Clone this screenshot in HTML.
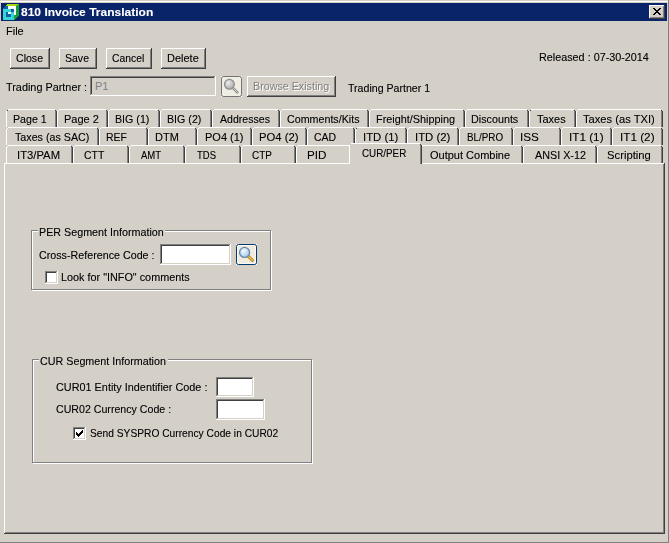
<!DOCTYPE html>
<html><head><meta charset="utf-8"><style>
html,body{margin:0;padding:0;width:669px;height:543px;overflow:hidden;background:#d4d0c8}
body>div{position:absolute}
.t{position:absolute;font:11px/13px "Liberation Sans",sans-serif;white-space:pre;color:#000;transform-origin:0 0;filter:url(#crisp)}
.c{text-align:center}
</style></head><body>
<svg width="0" height="0" style="position:absolute"><filter id="crisp" x="0" y="0" width="100%" height="100%"><feComponentTransfer><feFuncA type="gamma" amplitude="1" exponent="0.8" offset="0"/></feComponentTransfer></filter></svg>
<div style="left:0px;top:0px;width:669px;height:543px;background:#d4d0c8"></div>
<div style="left:0px;top:1px;width:668px;height:1px;background:#ffffff"></div>
<div style="left:668px;top:0px;width:1px;height:543px;background:#808080"></div>
<div style="left:0px;top:542px;width:669px;height:1px;background:#808080"></div>
<div style="left:1px;top:3px;width:666px;height:18px;background:#0a246a"></div>
<svg style="position:absolute;left:0;top:0" width="22" height="22" shape-rendering="crispEdges"><rect x="7" y="4" width="11" height="1" fill="#a8dc08"/><rect x="6" y="5" width="10" height="1" fill="#a8dc08"/><rect x="16" y="5" width="1" height="1" fill="#70c020"/><rect x="18" y="4" width="1" height="1" fill="#50b028"/><rect x="17" y="5" width="2" height="1" fill="#12a038"/><rect x="16" y="6" width="3" height="9" fill="#12a038"/><rect x="14" y="15" width="5" height="1" fill="#12a038"/><rect x="14" y="16" width="4" height="1" fill="#12a038"/><rect x="14" y="17" width="3" height="1" fill="#12a038"/><rect x="14" y="18" width="2" height="1" fill="#12a038"/><rect x="14" y="19" width="1" height="1" fill="#12a038"/><rect x="8" y="6" width="8" height="3" fill="#ffffff"/><rect x="14" y="9" width="2" height="6" fill="#ffffff"/><rect x="5" y="6" width="3" height="1" fill="#0868a8"/><rect x="4" y="7" width="4" height="1" fill="#0868a8"/><rect x="3" y="8" width="5" height="1" fill="#0868a8"/><rect x="3" y="9" width="11" height="11" fill="#38d6d6"/><rect x="11" y="9" width="3" height="3" fill="#0868a8"/><rect x="6" y="12" width="5" height="5" fill="#0868a8"/><rect x="8" y="12" width="3" height="2" fill="#ffffff"/></svg>
<div style="left:649px;top:5px;width:16px;height:14px;background:#d4d0c8"></div>
<div style="left:649px;top:5px;width:15px;height:1px;background:#ffffff"></div>
<div style="left:649px;top:5px;width:1px;height:13px;background:#ffffff"></div>
<div style="left:649px;top:18px;width:16px;height:1px;background:#404040"></div>
<div style="left:664px;top:5px;width:1px;height:14px;background:#404040"></div>
<div style="left:650px;top:17px;width:14px;height:1px;background:#808080"></div>
<div style="left:663px;top:6px;width:1px;height:12px;background:#808080"></div>
<svg style="position:absolute;left:653px;top:8px" width="8" height="7" shape-rendering="crispEdges"><path fill="#000" d="M0 0h1v1h-1zM1 0h1v1h-1zM6 0h1v1h-1zM7 0h1v1h-1zM1 1h1v1h-1zM2 1h1v1h-1zM5 1h1v1h-1zM6 1h1v1h-1zM2 2h1v1h-1zM3 2h1v1h-1zM4 2h1v1h-1zM5 2h1v1h-1zM3 3h1v1h-1zM4 3h1v1h-1zM2 4h1v1h-1zM3 4h1v1h-1zM4 4h1v1h-1zM5 4h1v1h-1zM1 5h1v1h-1zM2 5h1v1h-1zM5 5h1v1h-1zM6 5h1v1h-1zM0 6h1v1h-1zM1 6h1v1h-1zM6 6h1v1h-1zM7 6h1v1h-1z"/></svg>
<div style="left:10px;top:48px;width:40px;height:21px;background:#d4d0c8"></div>
<div style="left:10px;top:48px;width:39px;height:1px;background:#ffffff"></div>
<div style="left:10px;top:48px;width:1px;height:20px;background:#ffffff"></div>
<div style="left:10px;top:68px;width:40px;height:1px;background:#404040"></div>
<div style="left:49px;top:48px;width:1px;height:21px;background:#404040"></div>
<div style="left:11px;top:67px;width:38px;height:1px;background:#808080"></div>
<div style="left:48px;top:49px;width:1px;height:19px;background:#808080"></div>
<div style="left:59px;top:48px;width:38px;height:21px;background:#d4d0c8"></div>
<div style="left:59px;top:48px;width:37px;height:1px;background:#ffffff"></div>
<div style="left:59px;top:48px;width:1px;height:20px;background:#ffffff"></div>
<div style="left:59px;top:68px;width:38px;height:1px;background:#404040"></div>
<div style="left:96px;top:48px;width:1px;height:21px;background:#404040"></div>
<div style="left:60px;top:67px;width:36px;height:1px;background:#808080"></div>
<div style="left:95px;top:49px;width:1px;height:19px;background:#808080"></div>
<div style="left:106px;top:48px;width:46px;height:21px;background:#d4d0c8"></div>
<div style="left:106px;top:48px;width:45px;height:1px;background:#ffffff"></div>
<div style="left:106px;top:48px;width:1px;height:20px;background:#ffffff"></div>
<div style="left:106px;top:68px;width:46px;height:1px;background:#404040"></div>
<div style="left:151px;top:48px;width:1px;height:21px;background:#404040"></div>
<div style="left:107px;top:67px;width:44px;height:1px;background:#808080"></div>
<div style="left:150px;top:49px;width:1px;height:19px;background:#808080"></div>
<div style="left:161px;top:48px;width:45px;height:21px;background:#d4d0c8"></div>
<div style="left:161px;top:48px;width:44px;height:1px;background:#ffffff"></div>
<div style="left:161px;top:48px;width:1px;height:20px;background:#ffffff"></div>
<div style="left:161px;top:68px;width:45px;height:1px;background:#404040"></div>
<div style="left:205px;top:48px;width:1px;height:21px;background:#404040"></div>
<div style="left:162px;top:67px;width:43px;height:1px;background:#808080"></div>
<div style="left:204px;top:49px;width:1px;height:19px;background:#808080"></div>
<div style="left:90px;top:76px;width:126px;height:20px;background:#d4d0c8"></div>
<div style="left:90px;top:76px;width:125px;height:1px;background:#808080"></div>
<div style="left:90px;top:76px;width:1px;height:19px;background:#808080"></div>
<div style="left:91px;top:77px;width:123px;height:1px;background:#404040"></div>
<div style="left:91px;top:77px;width:1px;height:17px;background:#404040"></div>
<div style="left:90px;top:95px;width:126px;height:1px;background:#ffffff"></div>
<div style="left:215px;top:76px;width:1px;height:20px;background:#ffffff"></div>
<div style="left:91px;top:94px;width:124px;height:1px;background:#d4d0c8"></div>
<div style="left:214px;top:77px;width:1px;height:18px;background:#d4d0c8"></div>
<svg style="position:absolute;left:221px;top:76px" width="21" height="21">
<defs><radialGradient id="dg" cx="0.38" cy="0.35" r="0.7"><stop offset="0" stop-color="#ececec"/><stop offset="1" stop-color="#a8a8a8"/></radialGradient></defs>
<rect x="0" y="0" width="1" height="1" fill="#fff"/><rect x="20" y="0" width="1" height="1" fill="#fff"/><rect x="0" y="20" width="1" height="1" fill="#fff"/><rect x="20" y="20" width="1" height="1" fill="#fff"/><rect x="0.5" y="0.5" width="20" height="20" rx="2" fill="#f0ede2" stroke="#747474"/>
<line x1="11.8" y1="11.8" x2="16.3" y2="16.3" stroke="#8a8a8a" stroke-width="2.6" stroke-linecap="round"/>
<line x1="11.8" y1="11.8" x2="16.3" y2="16.3" stroke="#d8d8d8" stroke-width="1" stroke-linecap="round"/>
<circle cx="8.4" cy="8.3" r="4.9" fill="url(#dg)" stroke="#8e8e8e" stroke-width="1.3"/>
</svg>
<div style="left:247px;top:76px;width:89px;height:21px;background:#d4d0c8"></div>
<div style="left:247px;top:76px;width:88px;height:1px;background:#ffffff"></div>
<div style="left:247px;top:76px;width:1px;height:20px;background:#ffffff"></div>
<div style="left:247px;top:96px;width:89px;height:1px;background:#404040"></div>
<div style="left:335px;top:76px;width:1px;height:21px;background:#404040"></div>
<div style="left:248px;top:95px;width:87px;height:1px;background:#808080"></div>
<div style="left:334px;top:77px;width:1px;height:19px;background:#808080"></div>
<div style="left:4px;top:163px;width:661px;height:371px;background:#d4d0c8"></div>
<div style="left:4px;top:163px;width:660px;height:1px;background:#ffffff"></div>
<div style="left:4px;top:163px;width:1px;height:370px;background:#ffffff"></div>
<div style="left:4px;top:533px;width:661px;height:1px;background:#404040"></div>
<div style="left:664px;top:163px;width:1px;height:371px;background:#404040"></div>
<div style="left:5px;top:532px;width:659px;height:1px;background:#808080"></div>
<div style="left:663px;top:164px;width:1px;height:369px;background:#808080"></div>
<div style="left:6px;top:109px;width:51px;height:18px;background:#d4d0c8"></div>
<div style="left:8px;top:109px;width:47px;height:1px;background:#ffffff"></div>
<div style="left:7px;top:110px;width:1px;height:1px;background:#ffffff"></div>
<div style="left:6px;top:111px;width:1px;height:16px;background:#ffffff"></div>
<div style="left:55px;top:110px;width:1px;height:1px;background:#404040"></div>
<div style="left:55px;top:111px;width:1px;height:16px;background:#808080"></div>
<div style="left:56px;top:111px;width:1px;height:16px;background:#404040"></div>
<div style="left:57px;top:109px;width:51px;height:18px;background:#d4d0c8"></div>
<div style="left:59px;top:109px;width:47px;height:1px;background:#ffffff"></div>
<div style="left:58px;top:110px;width:1px;height:1px;background:#ffffff"></div>
<div style="left:57px;top:111px;width:1px;height:16px;background:#ffffff"></div>
<div style="left:106px;top:110px;width:1px;height:1px;background:#404040"></div>
<div style="left:106px;top:111px;width:1px;height:16px;background:#808080"></div>
<div style="left:107px;top:111px;width:1px;height:16px;background:#404040"></div>
<div style="left:108px;top:109px;width:52px;height:18px;background:#d4d0c8"></div>
<div style="left:110px;top:109px;width:48px;height:1px;background:#ffffff"></div>
<div style="left:109px;top:110px;width:1px;height:1px;background:#ffffff"></div>
<div style="left:108px;top:111px;width:1px;height:16px;background:#ffffff"></div>
<div style="left:158px;top:110px;width:1px;height:1px;background:#404040"></div>
<div style="left:158px;top:111px;width:1px;height:16px;background:#808080"></div>
<div style="left:159px;top:111px;width:1px;height:16px;background:#404040"></div>
<div style="left:160px;top:109px;width:52px;height:18px;background:#d4d0c8"></div>
<div style="left:162px;top:109px;width:48px;height:1px;background:#ffffff"></div>
<div style="left:161px;top:110px;width:1px;height:1px;background:#ffffff"></div>
<div style="left:160px;top:111px;width:1px;height:16px;background:#ffffff"></div>
<div style="left:210px;top:110px;width:1px;height:1px;background:#404040"></div>
<div style="left:210px;top:111px;width:1px;height:16px;background:#808080"></div>
<div style="left:211px;top:111px;width:1px;height:16px;background:#404040"></div>
<div style="left:212px;top:109px;width:68px;height:18px;background:#d4d0c8"></div>
<div style="left:214px;top:109px;width:64px;height:1px;background:#ffffff"></div>
<div style="left:213px;top:110px;width:1px;height:1px;background:#ffffff"></div>
<div style="left:212px;top:111px;width:1px;height:16px;background:#ffffff"></div>
<div style="left:278px;top:110px;width:1px;height:1px;background:#404040"></div>
<div style="left:278px;top:111px;width:1px;height:16px;background:#808080"></div>
<div style="left:279px;top:111px;width:1px;height:16px;background:#404040"></div>
<div style="left:280px;top:109px;width:89px;height:18px;background:#d4d0c8"></div>
<div style="left:282px;top:109px;width:85px;height:1px;background:#ffffff"></div>
<div style="left:281px;top:110px;width:1px;height:1px;background:#ffffff"></div>
<div style="left:280px;top:111px;width:1px;height:16px;background:#ffffff"></div>
<div style="left:367px;top:110px;width:1px;height:1px;background:#404040"></div>
<div style="left:367px;top:111px;width:1px;height:16px;background:#808080"></div>
<div style="left:368px;top:111px;width:1px;height:16px;background:#404040"></div>
<div style="left:369px;top:109px;width:96px;height:18px;background:#d4d0c8"></div>
<div style="left:371px;top:109px;width:92px;height:1px;background:#ffffff"></div>
<div style="left:370px;top:110px;width:1px;height:1px;background:#ffffff"></div>
<div style="left:369px;top:111px;width:1px;height:16px;background:#ffffff"></div>
<div style="left:463px;top:110px;width:1px;height:1px;background:#404040"></div>
<div style="left:463px;top:111px;width:1px;height:16px;background:#808080"></div>
<div style="left:464px;top:111px;width:1px;height:16px;background:#404040"></div>
<div style="left:465px;top:109px;width:64px;height:18px;background:#d4d0c8"></div>
<div style="left:467px;top:109px;width:60px;height:1px;background:#ffffff"></div>
<div style="left:466px;top:110px;width:1px;height:1px;background:#ffffff"></div>
<div style="left:465px;top:111px;width:1px;height:16px;background:#ffffff"></div>
<div style="left:527px;top:110px;width:1px;height:1px;background:#404040"></div>
<div style="left:527px;top:111px;width:1px;height:16px;background:#808080"></div>
<div style="left:528px;top:111px;width:1px;height:16px;background:#404040"></div>
<div style="left:529px;top:109px;width:47px;height:18px;background:#d4d0c8"></div>
<div style="left:531px;top:109px;width:43px;height:1px;background:#ffffff"></div>
<div style="left:530px;top:110px;width:1px;height:1px;background:#ffffff"></div>
<div style="left:529px;top:111px;width:1px;height:16px;background:#ffffff"></div>
<div style="left:574px;top:110px;width:1px;height:1px;background:#404040"></div>
<div style="left:574px;top:111px;width:1px;height:16px;background:#808080"></div>
<div style="left:575px;top:111px;width:1px;height:16px;background:#404040"></div>
<div style="left:576px;top:109px;width:87px;height:18px;background:#d4d0c8"></div>
<div style="left:578px;top:109px;width:83px;height:1px;background:#ffffff"></div>
<div style="left:577px;top:110px;width:1px;height:1px;background:#ffffff"></div>
<div style="left:576px;top:111px;width:1px;height:16px;background:#ffffff"></div>
<div style="left:661px;top:110px;width:1px;height:1px;background:#404040"></div>
<div style="left:661px;top:111px;width:1px;height:16px;background:#808080"></div>
<div style="left:662px;top:111px;width:1px;height:16px;background:#404040"></div>
<div style="left:6px;top:127px;width:93px;height:18px;background:#d4d0c8"></div>
<div style="left:8px;top:127px;width:89px;height:1px;background:#ffffff"></div>
<div style="left:7px;top:128px;width:1px;height:1px;background:#ffffff"></div>
<div style="left:6px;top:129px;width:1px;height:16px;background:#ffffff"></div>
<div style="left:97px;top:128px;width:1px;height:1px;background:#404040"></div>
<div style="left:97px;top:129px;width:1px;height:16px;background:#808080"></div>
<div style="left:98px;top:129px;width:1px;height:16px;background:#404040"></div>
<div style="left:99px;top:127px;width:49px;height:18px;background:#d4d0c8"></div>
<div style="left:101px;top:127px;width:45px;height:1px;background:#ffffff"></div>
<div style="left:100px;top:128px;width:1px;height:1px;background:#ffffff"></div>
<div style="left:99px;top:129px;width:1px;height:16px;background:#ffffff"></div>
<div style="left:146px;top:128px;width:1px;height:1px;background:#404040"></div>
<div style="left:146px;top:129px;width:1px;height:16px;background:#808080"></div>
<div style="left:147px;top:129px;width:1px;height:16px;background:#404040"></div>
<div style="left:148px;top:127px;width:49px;height:18px;background:#d4d0c8"></div>
<div style="left:150px;top:127px;width:45px;height:1px;background:#ffffff"></div>
<div style="left:149px;top:128px;width:1px;height:1px;background:#ffffff"></div>
<div style="left:148px;top:129px;width:1px;height:16px;background:#ffffff"></div>
<div style="left:195px;top:128px;width:1px;height:1px;background:#404040"></div>
<div style="left:195px;top:129px;width:1px;height:16px;background:#808080"></div>
<div style="left:196px;top:129px;width:1px;height:16px;background:#404040"></div>
<div style="left:197px;top:127px;width:55px;height:18px;background:#d4d0c8"></div>
<div style="left:199px;top:127px;width:51px;height:1px;background:#ffffff"></div>
<div style="left:198px;top:128px;width:1px;height:1px;background:#ffffff"></div>
<div style="left:197px;top:129px;width:1px;height:16px;background:#ffffff"></div>
<div style="left:250px;top:128px;width:1px;height:1px;background:#404040"></div>
<div style="left:250px;top:129px;width:1px;height:16px;background:#808080"></div>
<div style="left:251px;top:129px;width:1px;height:16px;background:#404040"></div>
<div style="left:252px;top:127px;width:55px;height:18px;background:#d4d0c8"></div>
<div style="left:254px;top:127px;width:51px;height:1px;background:#ffffff"></div>
<div style="left:253px;top:128px;width:1px;height:1px;background:#ffffff"></div>
<div style="left:252px;top:129px;width:1px;height:16px;background:#ffffff"></div>
<div style="left:305px;top:128px;width:1px;height:1px;background:#404040"></div>
<div style="left:305px;top:129px;width:1px;height:16px;background:#808080"></div>
<div style="left:306px;top:129px;width:1px;height:16px;background:#404040"></div>
<div style="left:307px;top:127px;width:48px;height:18px;background:#d4d0c8"></div>
<div style="left:309px;top:127px;width:44px;height:1px;background:#ffffff"></div>
<div style="left:308px;top:128px;width:1px;height:1px;background:#ffffff"></div>
<div style="left:307px;top:129px;width:1px;height:16px;background:#ffffff"></div>
<div style="left:353px;top:128px;width:1px;height:1px;background:#404040"></div>
<div style="left:353px;top:129px;width:1px;height:16px;background:#808080"></div>
<div style="left:354px;top:129px;width:1px;height:16px;background:#404040"></div>
<div style="left:355px;top:127px;width:52px;height:18px;background:#d4d0c8"></div>
<div style="left:357px;top:127px;width:48px;height:1px;background:#ffffff"></div>
<div style="left:356px;top:128px;width:1px;height:1px;background:#ffffff"></div>
<div style="left:355px;top:129px;width:1px;height:16px;background:#ffffff"></div>
<div style="left:405px;top:128px;width:1px;height:1px;background:#404040"></div>
<div style="left:405px;top:129px;width:1px;height:16px;background:#808080"></div>
<div style="left:406px;top:129px;width:1px;height:16px;background:#404040"></div>
<div style="left:407px;top:127px;width:52px;height:18px;background:#d4d0c8"></div>
<div style="left:409px;top:127px;width:48px;height:1px;background:#ffffff"></div>
<div style="left:408px;top:128px;width:1px;height:1px;background:#ffffff"></div>
<div style="left:407px;top:129px;width:1px;height:16px;background:#ffffff"></div>
<div style="left:457px;top:128px;width:1px;height:1px;background:#404040"></div>
<div style="left:457px;top:129px;width:1px;height:16px;background:#808080"></div>
<div style="left:458px;top:129px;width:1px;height:16px;background:#404040"></div>
<div style="left:459px;top:127px;width:54px;height:18px;background:#d4d0c8"></div>
<div style="left:461px;top:127px;width:50px;height:1px;background:#ffffff"></div>
<div style="left:460px;top:128px;width:1px;height:1px;background:#ffffff"></div>
<div style="left:459px;top:129px;width:1px;height:16px;background:#ffffff"></div>
<div style="left:511px;top:128px;width:1px;height:1px;background:#404040"></div>
<div style="left:511px;top:129px;width:1px;height:16px;background:#808080"></div>
<div style="left:512px;top:129px;width:1px;height:16px;background:#404040"></div>
<div style="left:513px;top:127px;width:48px;height:18px;background:#d4d0c8"></div>
<div style="left:515px;top:127px;width:44px;height:1px;background:#ffffff"></div>
<div style="left:514px;top:128px;width:1px;height:1px;background:#ffffff"></div>
<div style="left:513px;top:129px;width:1px;height:16px;background:#ffffff"></div>
<div style="left:559px;top:128px;width:1px;height:1px;background:#404040"></div>
<div style="left:559px;top:129px;width:1px;height:16px;background:#808080"></div>
<div style="left:560px;top:129px;width:1px;height:16px;background:#404040"></div>
<div style="left:561px;top:127px;width:51px;height:18px;background:#d4d0c8"></div>
<div style="left:563px;top:127px;width:47px;height:1px;background:#ffffff"></div>
<div style="left:562px;top:128px;width:1px;height:1px;background:#ffffff"></div>
<div style="left:561px;top:129px;width:1px;height:16px;background:#ffffff"></div>
<div style="left:610px;top:128px;width:1px;height:1px;background:#404040"></div>
<div style="left:610px;top:129px;width:1px;height:16px;background:#808080"></div>
<div style="left:611px;top:129px;width:1px;height:16px;background:#404040"></div>
<div style="left:612px;top:127px;width:51px;height:18px;background:#d4d0c8"></div>
<div style="left:614px;top:127px;width:47px;height:1px;background:#ffffff"></div>
<div style="left:613px;top:128px;width:1px;height:1px;background:#ffffff"></div>
<div style="left:612px;top:129px;width:1px;height:16px;background:#ffffff"></div>
<div style="left:661px;top:128px;width:1px;height:1px;background:#404040"></div>
<div style="left:661px;top:129px;width:1px;height:16px;background:#808080"></div>
<div style="left:662px;top:129px;width:1px;height:16px;background:#404040"></div>
<div style="left:6px;top:145px;width:67px;height:18px;background:#d4d0c8"></div>
<div style="left:8px;top:145px;width:63px;height:1px;background:#ffffff"></div>
<div style="left:7px;top:146px;width:1px;height:1px;background:#ffffff"></div>
<div style="left:6px;top:147px;width:1px;height:16px;background:#ffffff"></div>
<div style="left:71px;top:146px;width:1px;height:1px;background:#404040"></div>
<div style="left:71px;top:147px;width:1px;height:16px;background:#808080"></div>
<div style="left:72px;top:147px;width:1px;height:16px;background:#404040"></div>
<div style="left:73px;top:145px;width:56px;height:18px;background:#d4d0c8"></div>
<div style="left:75px;top:145px;width:52px;height:1px;background:#ffffff"></div>
<div style="left:74px;top:146px;width:1px;height:1px;background:#ffffff"></div>
<div style="left:73px;top:147px;width:1px;height:16px;background:#ffffff"></div>
<div style="left:127px;top:146px;width:1px;height:1px;background:#404040"></div>
<div style="left:127px;top:147px;width:1px;height:16px;background:#808080"></div>
<div style="left:128px;top:147px;width:1px;height:16px;background:#404040"></div>
<div style="left:129px;top:145px;width:56px;height:18px;background:#d4d0c8"></div>
<div style="left:131px;top:145px;width:52px;height:1px;background:#ffffff"></div>
<div style="left:130px;top:146px;width:1px;height:1px;background:#ffffff"></div>
<div style="left:129px;top:147px;width:1px;height:16px;background:#ffffff"></div>
<div style="left:183px;top:146px;width:1px;height:1px;background:#404040"></div>
<div style="left:183px;top:147px;width:1px;height:16px;background:#808080"></div>
<div style="left:184px;top:147px;width:1px;height:16px;background:#404040"></div>
<div style="left:185px;top:145px;width:56px;height:18px;background:#d4d0c8"></div>
<div style="left:187px;top:145px;width:52px;height:1px;background:#ffffff"></div>
<div style="left:186px;top:146px;width:1px;height:1px;background:#ffffff"></div>
<div style="left:185px;top:147px;width:1px;height:16px;background:#ffffff"></div>
<div style="left:239px;top:146px;width:1px;height:1px;background:#404040"></div>
<div style="left:239px;top:147px;width:1px;height:16px;background:#808080"></div>
<div style="left:240px;top:147px;width:1px;height:16px;background:#404040"></div>
<div style="left:241px;top:145px;width:55px;height:18px;background:#d4d0c8"></div>
<div style="left:243px;top:145px;width:51px;height:1px;background:#ffffff"></div>
<div style="left:242px;top:146px;width:1px;height:1px;background:#ffffff"></div>
<div style="left:241px;top:147px;width:1px;height:16px;background:#ffffff"></div>
<div style="left:294px;top:146px;width:1px;height:1px;background:#404040"></div>
<div style="left:294px;top:147px;width:1px;height:16px;background:#808080"></div>
<div style="left:295px;top:147px;width:1px;height:16px;background:#404040"></div>
<div style="left:296px;top:145px;width:55px;height:18px;background:#d4d0c8"></div>
<div style="left:298px;top:145px;width:51px;height:1px;background:#ffffff"></div>
<div style="left:297px;top:146px;width:1px;height:1px;background:#ffffff"></div>
<div style="left:296px;top:147px;width:1px;height:16px;background:#ffffff"></div>
<div style="left:349px;top:146px;width:1px;height:1px;background:#404040"></div>
<div style="left:349px;top:147px;width:1px;height:16px;background:#808080"></div>
<div style="left:350px;top:147px;width:1px;height:16px;background:#404040"></div>
<div style="left:420px;top:145px;width:103px;height:18px;background:#d4d0c8"></div>
<div style="left:422px;top:145px;width:99px;height:1px;background:#ffffff"></div>
<div style="left:421px;top:146px;width:1px;height:1px;background:#ffffff"></div>
<div style="left:420px;top:147px;width:1px;height:16px;background:#ffffff"></div>
<div style="left:521px;top:146px;width:1px;height:1px;background:#404040"></div>
<div style="left:521px;top:147px;width:1px;height:16px;background:#808080"></div>
<div style="left:522px;top:147px;width:1px;height:16px;background:#404040"></div>
<div style="left:523px;top:145px;width:74px;height:18px;background:#d4d0c8"></div>
<div style="left:525px;top:145px;width:70px;height:1px;background:#ffffff"></div>
<div style="left:524px;top:146px;width:1px;height:1px;background:#ffffff"></div>
<div style="left:523px;top:147px;width:1px;height:16px;background:#ffffff"></div>
<div style="left:595px;top:146px;width:1px;height:1px;background:#404040"></div>
<div style="left:595px;top:147px;width:1px;height:16px;background:#808080"></div>
<div style="left:596px;top:147px;width:1px;height:16px;background:#404040"></div>
<div style="left:597px;top:145px;width:66px;height:18px;background:#d4d0c8"></div>
<div style="left:599px;top:145px;width:62px;height:1px;background:#ffffff"></div>
<div style="left:598px;top:146px;width:1px;height:1px;background:#ffffff"></div>
<div style="left:597px;top:147px;width:1px;height:16px;background:#ffffff"></div>
<div style="left:661px;top:146px;width:1px;height:1px;background:#404040"></div>
<div style="left:661px;top:147px;width:1px;height:16px;background:#808080"></div>
<div style="left:662px;top:147px;width:1px;height:16px;background:#404040"></div>
<div style="left:7px;top:110px;width:1px;height:1px;background:#404040"></div>
<div style="left:530px;top:110px;width:1px;height:1px;background:#404040"></div>
<div style="left:356px;top:128px;width:1px;height:1px;background:#404040"></div>
<div style="left:349px;top:143px;width:73px;height:21px;background:#d4d0c8"></div>
<div style="left:351px;top:143px;width:69px;height:1px;background:#ffffff"></div>
<div style="left:349px;top:145px;width:1px;height:19px;background:#ffffff"></div>
<div style="left:420px;top:144px;width:1px;height:1px;background:#404040"></div>
<div style="left:420px;top:145px;width:1px;height:19px;background:#808080"></div>
<div style="left:421px;top:145px;width:1px;height:19px;background:#404040"></div>
<div style="left:32px;top:290px;width:240px;height:1px;background:#ffffff"></div>
<div style="left:271px;top:231px;width:1px;height:60px;background:#ffffff"></div>
<div style="left:32px;top:231px;width:239px;height:1px;background:#ffffff"></div>
<div style="left:32px;top:231px;width:1px;height:59px;background:#ffffff"></div>
<div style="left:31px;top:230px;width:240px;height:1px;background:#808080"></div>
<div style="left:31px;top:230px;width:1px;height:60px;background:#808080"></div>
<div style="left:31px;top:289px;width:240px;height:1px;background:#808080"></div>
<div style="left:270px;top:230px;width:1px;height:60px;background:#808080"></div>
<div style="left:38px;top:226px;width:127px;height:10px;background:#d4d0c8"></div>
<div style="left:160px;top:244px;width:71px;height:21px;background:#fff"></div>
<div style="left:160px;top:244px;width:70px;height:1px;background:#808080"></div>
<div style="left:160px;top:244px;width:1px;height:20px;background:#808080"></div>
<div style="left:161px;top:245px;width:68px;height:1px;background:#404040"></div>
<div style="left:161px;top:245px;width:1px;height:18px;background:#404040"></div>
<div style="left:160px;top:264px;width:71px;height:1px;background:#ffffff"></div>
<div style="left:230px;top:244px;width:1px;height:21px;background:#ffffff"></div>
<div style="left:161px;top:263px;width:69px;height:1px;background:#d4d0c8"></div>
<div style="left:229px;top:245px;width:1px;height:19px;background:#d4d0c8"></div>
<svg style="position:absolute;left:236px;top:244px" width="21" height="21">
<defs><radialGradient id="lg" cx="0.38" cy="0.35" r="0.7"><stop offset="0" stop-color="#f4faff"/><stop offset="1" stop-color="#9cc8ec"/></radialGradient>
<linearGradient id="hg" x1="0" y1="0" x2="1" y2="1"><stop offset="0" stop-color="#f0d060"/><stop offset="1" stop-color="#c89020"/></linearGradient></defs>
<rect x="0" y="0" width="1" height="1" fill="#fff"/><rect x="20" y="0" width="1" height="1" fill="#fff"/><rect x="0" y="20" width="1" height="1" fill="#fff"/><rect x="20" y="20" width="1" height="1" fill="#fff"/><rect x="0.5" y="0.5" width="20" height="20" rx="2" fill="#efebdf" stroke="#003c74"/>
<rect x="1.5" y="1.5" width="18" height="18" rx="1.5" fill="none" stroke="#fbf9f2" stroke-width="1"/>
<line x1="12" y1="12" x2="16.3" y2="16.3" stroke="#a87810" stroke-width="3" stroke-linecap="round"/>
<line x1="12" y1="12" x2="16.3" y2="16.3" stroke="#f0c840" stroke-width="1.4" stroke-linecap="round"/>
<circle cx="8.6" cy="8.4" r="5" fill="url(#lg)" stroke="#6c84a8" stroke-width="1.3"/>
</svg>
<div style="left:45px;top:271px;width:13px;height:13px;background:#fff"></div>
<div style="left:45px;top:271px;width:12px;height:1px;background:#808080"></div>
<div style="left:45px;top:271px;width:1px;height:12px;background:#808080"></div>
<div style="left:46px;top:272px;width:10px;height:1px;background:#404040"></div>
<div style="left:46px;top:272px;width:1px;height:10px;background:#404040"></div>
<div style="left:45px;top:283px;width:13px;height:1px;background:#ffffff"></div>
<div style="left:57px;top:271px;width:1px;height:13px;background:#ffffff"></div>
<div style="left:46px;top:282px;width:11px;height:1px;background:#d4d0c8"></div>
<div style="left:56px;top:272px;width:1px;height:11px;background:#d4d0c8"></div>
<div style="left:33px;top:463px;width:280px;height:1px;background:#ffffff"></div>
<div style="left:312px;top:360px;width:1px;height:104px;background:#ffffff"></div>
<div style="left:33px;top:360px;width:279px;height:1px;background:#ffffff"></div>
<div style="left:33px;top:360px;width:1px;height:103px;background:#ffffff"></div>
<div style="left:32px;top:359px;width:280px;height:1px;background:#808080"></div>
<div style="left:32px;top:359px;width:1px;height:104px;background:#808080"></div>
<div style="left:32px;top:462px;width:280px;height:1px;background:#808080"></div>
<div style="left:311px;top:359px;width:1px;height:104px;background:#808080"></div>
<div style="left:39px;top:355px;width:129px;height:10px;background:#d4d0c8"></div>
<div style="left:216px;top:377px;width:38px;height:20px;background:#fff"></div>
<div style="left:216px;top:377px;width:37px;height:1px;background:#808080"></div>
<div style="left:216px;top:377px;width:1px;height:19px;background:#808080"></div>
<div style="left:217px;top:378px;width:35px;height:1px;background:#404040"></div>
<div style="left:217px;top:378px;width:1px;height:17px;background:#404040"></div>
<div style="left:216px;top:396px;width:38px;height:1px;background:#ffffff"></div>
<div style="left:253px;top:377px;width:1px;height:20px;background:#ffffff"></div>
<div style="left:217px;top:395px;width:36px;height:1px;background:#d4d0c8"></div>
<div style="left:252px;top:378px;width:1px;height:18px;background:#d4d0c8"></div>
<div style="left:216px;top:399px;width:49px;height:21px;background:#fff"></div>
<div style="left:216px;top:399px;width:48px;height:1px;background:#808080"></div>
<div style="left:216px;top:399px;width:1px;height:20px;background:#808080"></div>
<div style="left:217px;top:400px;width:46px;height:1px;background:#404040"></div>
<div style="left:217px;top:400px;width:1px;height:18px;background:#404040"></div>
<div style="left:216px;top:419px;width:49px;height:1px;background:#ffffff"></div>
<div style="left:264px;top:399px;width:1px;height:21px;background:#ffffff"></div>
<div style="left:217px;top:418px;width:47px;height:1px;background:#d4d0c8"></div>
<div style="left:263px;top:400px;width:1px;height:19px;background:#d4d0c8"></div>
<div style="left:73px;top:427px;width:13px;height:13px;background:#fff"></div>
<div style="left:73px;top:427px;width:12px;height:1px;background:#808080"></div>
<div style="left:73px;top:427px;width:1px;height:12px;background:#808080"></div>
<div style="left:74px;top:428px;width:10px;height:1px;background:#404040"></div>
<div style="left:74px;top:428px;width:1px;height:10px;background:#404040"></div>
<div style="left:73px;top:439px;width:13px;height:1px;background:#ffffff"></div>
<div style="left:85px;top:427px;width:1px;height:13px;background:#ffffff"></div>
<div style="left:74px;top:438px;width:11px;height:1px;background:#d4d0c8"></div>
<div style="left:84px;top:428px;width:1px;height:11px;background:#d4d0c8"></div>
<svg style="position:absolute;left:76px;top:430px" width="7" height="7" shape-rendering="crispEdges"><path fill="#000" d="M6 0h1v3h-1v1h-1v1h-1v1h-1v1h-1v-1h-1v-1h-1v-3h1v1h1v1h1v-1h1v-1h1z"/></svg>
<span class="t" style="left:21.00px;top:6px;transform:scaleX(1.0925);color:#fff;font-weight:bold">810 Invoice Translation</span>
<span class="t" style="left:6.00px;top:25px;">File</span>
<span class="t" style="left:16.04px;top:52px;transform:scaleX(0.9615);">Close</span>
<span class="t" style="left:65.04px;top:52px;transform:scaleX(0.9565);">Save</span>
<span class="t" style="left:112.06px;top:52px;transform:scaleX(0.9396);">Cancel</span>
<span class="t" style="left:167.00px;top:52px;">Delete</span>
<span class="t" style="left:539.02px;top:51px;transform:scaleX(0.9818);">Released : 07-30-2014</span>
<span class="t" style="left:6.00px;top:81px;transform:scaleX(0.9875);">Trading Partner :</span>
<span class="t" style="left:95.00px;top:80px;color:#808080;filter:none">P1</span>
<span class="t" style="left:254.03px;top:81px;transform:scaleX(0.9737);color:#fff;filter:none">Browse Existing</span>
<span class="t" style="left:253.03px;top:80px;transform:scaleX(0.9737);color:#808080;filter:none">Browse Existing</span>
<span class="t" style="left:348.00px;top:82px;transform:scaleX(0.9643);">Trading Partner 1</span>
<span class="t" style="left:39.02px;top:226px;transform:scaleX(0.9760);">PER Segment Information</span>
<span class="t" style="left:39.03px;top:249px;transform:scaleX(0.9741);">Cross-Reference Code :</span>
<span class="t" style="left:61.02px;top:271px;transform:scaleX(0.9844);">Look for &quot;INFO&quot; comments</span>
<span class="t" style="left:40.02px;top:355px;transform:scaleX(0.9764);">CUR Segment Information</span>
<span class="t" style="left:56.01px;top:381px;transform:scaleX(0.9868);">CUR01 Entity Indentifier Code :</span>
<span class="t" style="left:56.03px;top:403px;transform:scaleX(0.9655);">CUR02 Currency Code :</span>
<span class="t" style="left:90.07px;top:427px;transform:scaleX(0.9300);">Send SYSPRO Currency Code in CUR02</span>
<span class="t" style="left:13.03px;top:113px;transform:scaleX(0.9688);">Page 1</span>
<span class="t" style="left:64.00px;top:113px;">Page 2</span>
<span class="t" style="left:115.03px;top:113px;transform:scaleX(0.9697);">BIG (1)</span>
<span class="t" style="left:167.03px;top:113px;transform:scaleX(0.9697);">BIG (2)</span>
<span class="t" style="left:220.00px;top:113px;transform:scaleX(0.9608);">Addresses</span>
<span class="t" style="left:287.03px;top:113px;transform:scaleX(0.9722);">Comments/Kits</span>
<span class="t" style="left:376.01px;top:113px;transform:scaleX(0.9875);">Freight/Shipping</span>
<span class="t" style="left:471.02px;top:113px;transform:scaleX(0.9783);">Discounts</span>
<span class="t" style="left:537.00px;top:113px;">Taxes</span>
<span class="t" style="left:583.00px;top:113px;transform:scaleX(1.0145);">Taxes (as TXI)</span>
<span class="t" style="left:15.00px;top:131px;transform:scaleX(0.9733);">Taxes (as SAC)</span>
<span class="t" style="left:106.05px;top:131px;transform:scaleX(0.9500);">REF</span>
<span class="t" style="left:155.00px;top:131px;">DTM</span>
<span class="t" style="left:205.00px;top:131px;">PO4 (1)</span>
<span class="t" style="left:258.97px;top:131px;transform:scaleX(1.0278);">PO4 (2)</span>
<span class="t" style="left:314.05px;top:131px;transform:scaleX(0.9524);">CAD</span>
<span class="t" style="left:362.97px;top:131px;transform:scaleX(1.0312);">ITD (1)</span>
<span class="t" style="left:414.97px;top:131px;transform:scaleX(1.0312);">ITD (2)</span>
<span class="t" style="left:467.11px;top:131px;transform:scaleX(0.8947);">BL/PRO</span>
<span class="t" style="left:519.93px;top:131px;transform:scaleX(1.0667);">ISS</span>
<span class="t" style="left:568.93px;top:131px;transform:scaleX(1.0667);">IT1 (1)</span>
<span class="t" style="left:619.93px;top:131px;transform:scaleX(1.0667);">IT1 (2)</span>
<span class="t" style="left:16.97px;top:149px;transform:scaleX(1.0256);">IT3/PAM</span>
<span class="t" style="left:84.05px;top:149px;transform:scaleX(0.9474);">CTT</span>
<span class="t" style="left:141.00px;top:149px;transform:scaleX(0.8636);">AMT</span>
<span class="t" style="left:197.00px;top:149px;transform:scaleX(0.8625);">TDS</span>
<span class="t" style="left:252.09px;top:149px;transform:scaleX(0.9056);">CTP</span>
<span class="t" style="left:306.94px;top:149px;transform:scaleX(1.0625);">PID</span>
<span class="t" style="left:362.11px;top:147px;transform:scaleX(0.8936);">CUR/PER</span>
<span class="t" style="left:430.00px;top:149px;">Output Combine</span>
<span class="t" style="left:535.00px;top:149px;transform:scaleX(0.9800);">ANSI X-12</span>
<span class="t" style="left:606.98px;top:149px;transform:scaleX(1.0250);">Scripting</span>
</body></html>
